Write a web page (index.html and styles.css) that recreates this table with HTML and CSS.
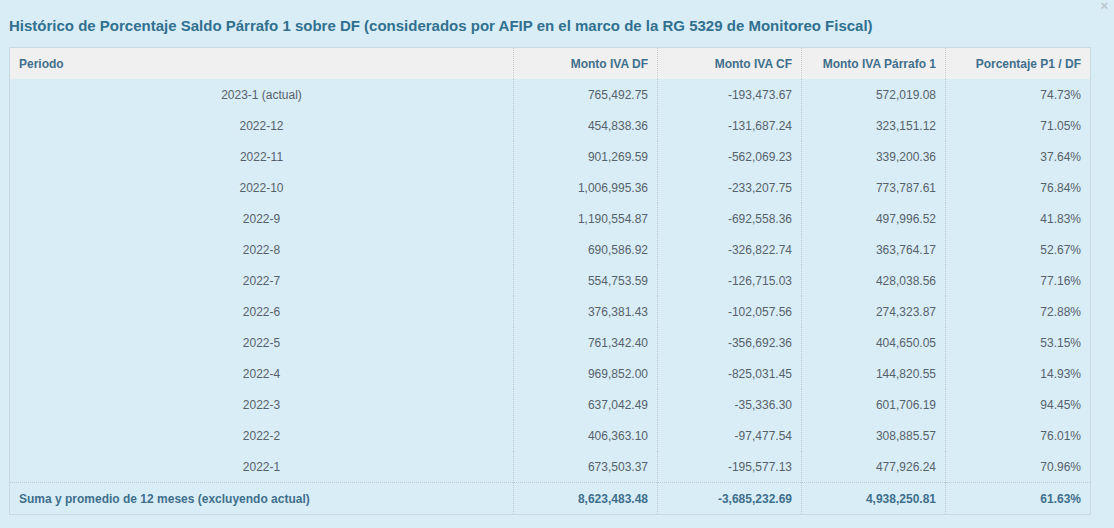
FILE: index.html
```html
<!DOCTYPE html>
<html lang="es">
<head>
<meta charset="utf-8">
<link rel="stylesheet" href="styles.css">
</head>
<body>
<div class="modal">
  <span class="close">×</span>
  <h4 class="title">Histórico de Porcentaje Saldo Párrafo 1 sobre DF (considerados por AFIP en el marco de la RG 5329 de Monitoreo Fiscal)</h4>
  <table class="grid">
    <thead>
      <tr><th class="left">Periodo</th><th>Monto IVA DF</th><th>Monto IVA CF</th><th>Monto IVA Párrafo 1</th><th>Porcentaje P1 / DF</th></tr>
    </thead>
    <tbody>
      <tr><td class="center">2023-1 (actual)</td><td>765,492.75</td><td>-193,473.67</td><td>572,019.08</td><td>74.73%</td></tr>
      <tr><td class="center">2022-12</td><td>454,838.36</td><td>-131,687.24</td><td>323,151.12</td><td>71.05%</td></tr>
      <tr><td class="center">2022-11</td><td>901,269.59</td><td>-562,069.23</td><td>339,200.36</td><td>37.64%</td></tr>
      <tr><td class="center">2022-10</td><td>1,006,995.36</td><td>-233,207.75</td><td>773,787.61</td><td>76.84%</td></tr>
      <tr><td class="center">2022-9</td><td>1,190,554.87</td><td>-692,558.36</td><td>497,996.52</td><td>41.83%</td></tr>
      <tr><td class="center">2022-8</td><td>690,586.92</td><td>-326,822.74</td><td>363,764.17</td><td>52.67%</td></tr>
      <tr><td class="center">2022-7</td><td>554,753.59</td><td>-126,715.03</td><td>428,038.56</td><td>77.16%</td></tr>
      <tr><td class="center">2022-6</td><td>376,381.43</td><td>-102,057.56</td><td>274,323.87</td><td>72.88%</td></tr>
      <tr><td class="center">2022-5</td><td>761,342.40</td><td>-356,692.36</td><td>404,650.05</td><td>53.15%</td></tr>
      <tr><td class="center">2022-4</td><td>969,852.00</td><td>-825,031.45</td><td>144,820.55</td><td>14.93%</td></tr>
      <tr><td class="center">2022-3</td><td>637,042.49</td><td>-35,336.30</td><td>601,706.19</td><td>94.45%</td></tr>
      <tr><td class="center">2022-2</td><td>406,363.10</td><td>-97,477.54</td><td>308,885.57</td><td>76.01%</td></tr>
      <tr><td class="center">2022-1</td><td>673,503.37</td><td>-195,577.13</td><td>477,926.24</td><td>70.96%</td></tr>
    </tbody>
    <tfoot>
      <tr><td class="left">Suma y promedio de 12 meses (excluyendo actual)</td><td>8,623,483.48</td><td>-3,685,232.69</td><td>4,938,250.81</td><td>61.63%</td></tr>
    </tfoot>
  </table>
</div>
</body>
</html>
```
FILE: styles.css
```css
html, body {
  margin: 0;
  padding: 0;
  background: #d9edf7;
}
body {
  font-family: "Liberation Sans", Arial, sans-serif;
  width: 1114px;
  height: 528px;
  overflow: hidden;
}
.modal {
  position: relative;
  padding: 17px 23px 0 9px;
}
.close {
  position: absolute;
  top: 0;
  right: 6px;
  font-size: 13px;
  font-weight: bold;
  color: #b9c6cd;
  line-height: 12px;
}
.title {
  margin: 0 0 12px 0;
  font-size: 15px;
  line-height: 18px;
  font-weight: bold;
  color: #31708f;
}
.grid {
  width: 1082px;
  border-collapse: collapse;
  border: 1px solid #c7d9e2;
  font-size: 12px;
  table-layout: fixed;
}
.grid th, .grid td {
  text-align: right;
  padding: 0 9px;
}
.grid th {
  background: #f0f0f0;
  color: #3f6f8c;
  font-weight: bold;
  height: 31px;
  border-left: 1px dotted #c8cccf;
}
.grid th:first-child { width: 485px; }
.grid th:nth-child(2), .grid th:nth-child(3), .grid th:nth-child(4) { width: 125px; }
.grid td {
  height: 31px;
  color: #56626b;
  border-left: 1px dotted #bccbd3;
}
.grid th.left, .grid td.left { text-align: left; }
.grid td.center { text-align: center; }
.grid tfoot td {
  height: 31px;
  font-weight: bold;
  color: #3f6f8c;
  border-top: 1px dotted #bccbd3;
}
```
